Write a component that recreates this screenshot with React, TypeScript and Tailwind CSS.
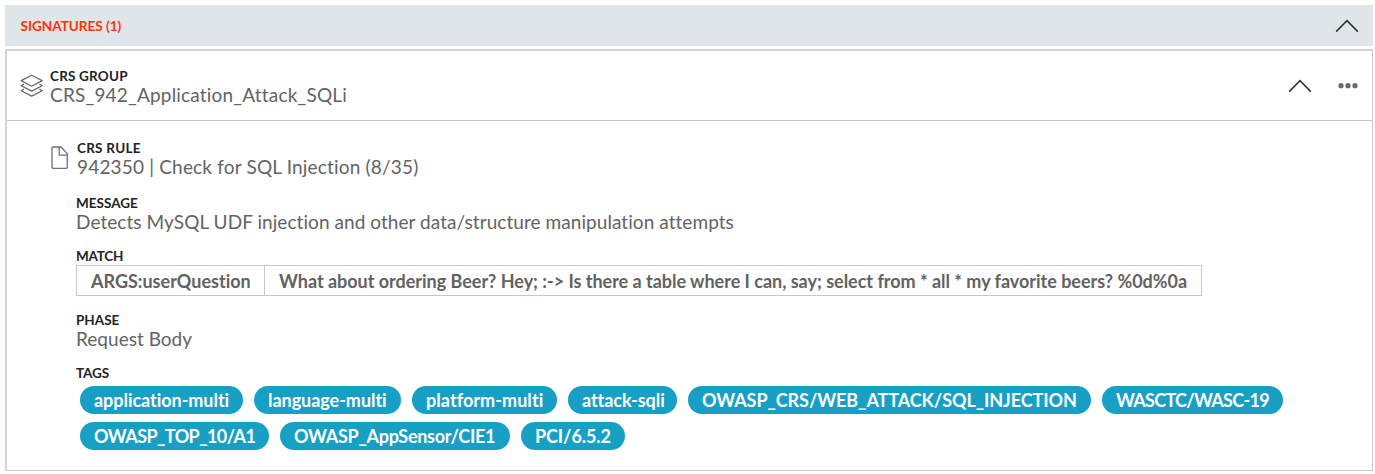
import React from "react";

type TextProps = { children: string; spacing?: string };

function Label({ children, spacing = "" }: TextProps) {
  return (
    <div className={`h-4 text-[13.5px] leading-4 font-bold whitespace-nowrap text-[#212224] ${spacing}`}>{children}</div>
  );
}

function Value({ children, spacing = "" }: TextProps) {
  return (
    <div className={`h-[22px] text-[19px] leading-[22px] whitespace-pre text-[#636363] ${spacing}`}>{children}</div>
  );
}

function Chevron() {
  return (
    <svg width="24" height="14" viewBox="0 0 24 14" fill="none" stroke="#303030" strokeWidth="1.5">
      <path d="M1.2 12.6 12 1.6l10.8 11" />
    </svg>
  );
}

function LayersIcon() {
  return (
    <svg width="23" height="24" viewBox="0 0 23 24" fill="none" stroke="#666666" strokeWidth="1.2" strokeLinejoin="round">
      <path d="M11.7 1.3 22.2 6.6 11.7 12.2 1.2 6.6Z" />
      <path d="M4 10.1 1.2 11.7l10.5 5.4 10.5-5.4-2.8-1.6" />
      <path d="M4 15.1 1.2 16.7l10.5 5.4 10.5-5.4-2.8-1.6" />
    </svg>
  );
}

function FileIcon() {
  return (
    <svg width="18" height="24" viewBox="0 0 18 24" fill="none" stroke="#707070" strokeWidth="1.3" strokeLinejoin="round">
      <path d="M1 2.3Q1 1 2.3 1H10l6.300 6.600v13.500q0 1.300-1.300 1.300H2.300Q1 22.400 1 21.100Z" />
      <path d="M8.200 1v8.100h8.100" />
    </svg>
  );
}

const tagRows = [
  [
    { name: "application-multi", style: "w-[163px] tracking-[-0.04px]" },
    { name: "language-multi", style: "w-[147px] tracking-[-0.04px]" },
    { name: "platform-multi", style: "w-[145px] tracking-[0.06px]" },
    { name: "attack-sqli", style: "w-[109px] tracking-[-0.063px]" },
    { name: "OWASP_CRS/WEB_ATTACK/SQL_INJECTION", style: "w-[403px] tracking-[-0.08px]" },
    { name: "WASCTC/WASC-19", style: "w-[181px] tracking-[-0.72px]" },
  ],
  [
    { name: "OWASP_TOP_10/A1", style: "w-[189px] tracking-[-0.57px]" },
    { name: "OWASP_AppSensor/CIE1", style: "w-[230px] tracking-[-0.29px]" },
    { name: "PCI/6.5.2", style: "w-[104px] tracking-[-0.09px]" },
  ],
];

export default function App() {
  return (
    <main className="h-[474px] overflow-hidden bg-white pt-[5px] pr-0.5 pl-[5px] font-['Lato',sans-serif] [font-variant-ligatures:none]">
      <header className="flex h-[41px] items-center justify-between bg-[#e0e5e9] pr-[14px] pl-[15.5px]">
        <h2 className="text-[13.5px] leading-4 font-bold tracking-[0.02px] text-[#ff3300]">SIGNATURES (1)</h2>
        <button aria-label="Collapse signatures" className="pt-px">
          <Chevron />
        </button>
      </header>

      <section className="mt-[3px] h-[422px] border border-t-2 border-l-2 border-[#d4d4d4] border-r-[#c8c8c8] border-b-[#c8c8c8]">
        <div className="flex h-[70px] items-center border-b border-[#c8c8c8] pr-[14px] pl-[13px]">
          <LayersIcon />
          <div className="ml-[7px] flex-1 pt-0.5">
            <Label spacing="tracking-[0.196px]">CRS GROUP</Label>
            <Value spacing="tracking-[0.191px]">CRS_942_Application_Attack_SQLi</Value>
          </div>
          <button aria-label="Collapse group">
            <Chevron />
          </button>
          <button aria-label="More actions" className="ml-[26px]">
            <svg width="20" height="6" viewBox="0 0 20 6" fill="#686868">
              <circle cx="3" cy="2.700" r="2.600" />
              <circle cx="10" cy="2.700" r="2.600" />
              <circle cx="17" cy="2.700" r="2.600" />
            </svg>
          </button>
        </div>

        <div className="flex pt-[18px] pl-11">
          <div className="pt-[7px]">
            <FileIcon />
          </div>
          <div className="pt-px pl-2">
            <Label spacing="tracking-[0.25px]">CRS RULE</Label>
            <Value spacing="tracking-[0.18px]">942350 | Check for SQL Injection (8/35)</Value>
          </div>
        </div>

        <div className="pt-[17px] pl-[69px]">
          <Label spacing="tracking-[0px]">MESSAGE</Label>
          <Value spacing="tracking-[0.062px]">Detects MySQL UDF injection and other data/structure manipulation attempts</Value>

          <div className="mt-[15px]">
            <Label spacing="tracking-[-0.25px]">MATCH</Label>
            <div className="mt-px flex h-[31px] w-[1126px] border border-[#c8c8c8] text-[18px] leading-[30px] font-bold whitespace-pre text-[#626262]">
              <div className="w-[188px] border-r border-[#c8c8c8] pl-[14px] tracking-[0px]">ARGS:userQuestion</div>
              <div className="pl-[14px] tracking-[-0.018px]">
                {"What about ordering Beer? Hey; :-> Is there a table where I can, say; select from * all * my favorite beers? %0d%0a"}
              </div>
            </div>
          </div>

          <div className="mt-4">
            <Label spacing="tracking-[0px]">PHASE</Label>
            <Value spacing="tracking-[0.02px]">Request Body</Value>
          </div>

          <div className="mt-[15px]">
            <Label spacing="tracking-[-0.1px]">TAGS</Label>
            <div className="mt-[5px] ml-1 flex flex-col gap-2">
              {tagRows.map((row, i) => (
                <div key={i} className="flex gap-[11px]">
                  {row.map((tag) => (
                    <span
                      key={tag.name}
                      className={`h-7 rounded-full bg-[#18a0c4] pl-[14px] text-[18px] leading-7 font-bold whitespace-nowrap text-white ${tag.style}`}
                    >
                      {tag.name}
                    </span>
                  ))}
                </div>
              ))}
            </div>
          </div>
        </div>
      </section>
    </main>
  );
}
